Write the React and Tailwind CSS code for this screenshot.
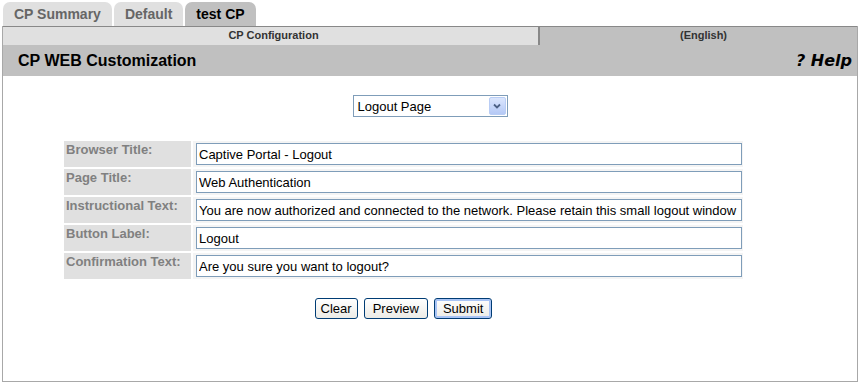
import React from "react";

const rows = [
  ["Browser Title:", "Captive Portal - Logout"],
  ["Page Title:", "Web Authentication"],
  [
    "Instructional Text:",
    "You are now authorized and connected to the network. Please retain this small logout window",
  ],
  ["Button Label:", "Logout"],
  ["Confirmation Text:", "Are you sure you want to logout?"],
];

function Tab({ label, active }) {
  return (
    <div
      className={
        "h-[24px] rounded-t-[7px] px-[11px] pt-[4px] text-[14px] font-bold leading-[16px] " +
        (active ? "bg-[#c0c0c0] text-black" : "bg-[#e0e0e0] text-[#666666]")
      }
    >
      {label}
    </div>
  );
}

function XpButton({ children, focused, pad }) {
  return (
    <button
      className={
        "h-[21px] rounded-[3px] border border-[#003c74] bg-gradient-to-b from-white to-[#ecebe6] text-[13px] leading-[17px] text-black " +
        pad +
        (focused ? " shadow-[inset_0_0_0_2px_#a9c4f5]" : "")
      }
    >
      {children}
    </button>
  );
}

export default function App() {
  return (
    <div className="h-[385px] w-[860px] bg-white font-['Liberation_Sans',Arial,sans-serif]">
      <div className="flex h-[26px] items-end gap-[2px] pl-[3px]">
        <Tab label="CP Summary" />
        <Tab label="Default" />
        <Tab label="test CP" active />
      </div>
      <div className="ml-[2px] flex h-[356px] w-[856px] flex-col border-b border-l border-r border-[#a8a8a8]">
        <div className="flex h-[19px] border-t border-[#888888] text-[11px] font-bold leading-[17px] text-[#333333]">
          <div className="w-[537px] border-r-2 border-[#888888] bg-[#e0e0e0] pl-[6px] text-center">
            CP Configuration
          </div>
          <div className="flex-1 bg-[#c0c0c0] pl-[10px] text-center">(English)</div>
        </div>
        <div className="flex h-[31px] items-center justify-between bg-[#c0c0c0] pl-[15px] pr-[5px]">
          <span className="text-[16px] font-bold text-black">CP WEB Customization</span>
          <span className="font-['DejaVu_Sans',sans-serif] text-[16px] font-bold italic text-black">
            ? Help
          </span>
        </div>
        <div className="flex justify-center pt-[19px]">
          <div className="flex h-[22px] w-[155px] items-center border border-[#7f9db9] bg-white pl-[4px] pr-[1px]">
            <span className="flex-1 pt-[1px] text-[13px] text-black">Logout Page</span>
            <div className="flex h-[18px] w-[17px] items-center justify-center rounded-[2px] border border-[#b9cdf5] bg-gradient-to-b from-[#dbe6fd] to-[#b5c9f6]">
              <svg width="8" height="6" viewBox="0 0 8 6">
                <path d="M1 1.5 L4 4.5 L7 1.5" stroke="#4d6185" strokeWidth="1.8" fill="none" />
              </svg>
            </div>
          </div>
        </div>
        <div className="ml-[61px] mt-[24px] w-[679px]">
          <div className="flex flex-col gap-[2px]">
            {rows.map(([label, value]) => (
              <div key={label} className="flex h-[26px] gap-[2px]">
                <div className="w-[127px] bg-[#e0e0e0] pl-[2px] pt-[1px] text-[13px] font-bold leading-[15px] text-[#808080]">
                  {label}
                </div>
                <div className="flex-1 bg-[#f4f4f4] pl-[3px] pr-[1px] pt-[2px]">
                  <input
                    readOnly
                    value={value}
                    className="block h-[22px] w-[546px] border border-[#7f9db9] bg-white px-[2px] text-[13px] text-black outline-none"
                  />
                </div>
              </div>
            ))}
          </div>
          <div className="mt-[19px] flex justify-center gap-[6px]">
            <XpButton pad="px-[5px]">Clear</XpButton>
            <XpButton pad="px-[8px]">Preview</XpButton>
            <XpButton pad="px-[8px]" focused>
              Submit
            </XpButton>
          </div>
        </div>
      </div>
    </div>
  );
}
